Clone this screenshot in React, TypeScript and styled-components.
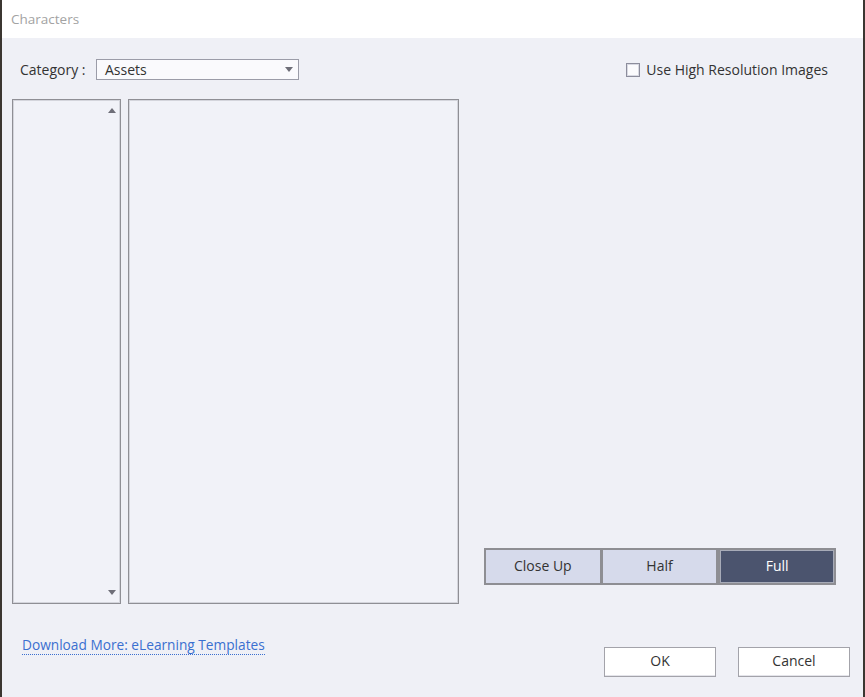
import * as React from "react";
import styled, { createGlobalStyle } from "styled-components";

const GlobalStyle = createGlobalStyle`
  html, body {
    margin: 0;
    padding: 0;
    background: #3b3631;
  }
  body {
    font-family: "Open Sans", "Noto Sans", "Liberation Sans", sans-serif;
    font-size: 14px;
    color: #333333;
  }
`;

const Dialog = styled.div`
  width: 861px;
  height: 697px;
  margin-left: 2px;
  background: #eff0f6;
  display: flex;
  flex-direction: column;
  overflow: hidden;
`;

const TitleBar = styled.div`
  height: 38px;
  background: #ffffff;
  display: flex;
  align-items: center;
  padding-left: 9px;
  font-size: 13.5px;
  color: #a3a3a3;
  flex-shrink: 0;
`;

const Content = styled.div`
  display: flex;
  flex-direction: column;
  padding: 21px 13px 0 10px;
  flex: 1;
`;

const TopRow = styled.div`
  height: 21px;
  display: flex;
  align-items: center;
  justify-content: space-between;
  margin-bottom: 19px;
`;

const CategoryGroup = styled.div`
  display: flex;
  align-items: center;
  padding-left: 8px;
`;

const Label = styled.span`
  width: 76px;
  color: #333333;
`;

const Select = styled.div`
  width: 188px;
  height: 19px;
  border: 1px solid #9b9ca8;
  background: #fafafd;
  display: flex;
  align-items: center;
  justify-content: space-between;
  padding: 0 5px 0 8px;
  box-sizing: content-box;
  color: #333333;
`;

const Caret = styled.span<{ $up?: boolean }>`
  display: block;
  width: 0;
  height: 0;
  border-left: 4px solid transparent;
  border-right: 4px solid transparent;
  ${(p) =>
    p.$up
      ? "border-bottom: 5px solid #6e6e78;"
      : "border-top: 5px solid #6e6e78;"}
`;

const CheckRow = styled.label`
  display: flex;
  align-items: center;
  gap: 6px;
  margin-right: 22px;
  color: #333333;
`;

const CheckBox = styled.span`
  width: 12px;
  height: 12px;
  border: 1px solid #8c8d9c;
  box-shadow: inset 0 0 0 1px #d8d9e2;
  background: #fbfbfd;
`;

const MainRow = styled.div`
  height: 505px;
  display: flex;
`;

const ListBox = styled.div<{ $width: number }>`
  width: ${(p) => p.$width}px;
  height: 100%;
  box-sizing: border-box;
  border: 1px solid #8f8f95;
  box-shadow: inset 0 0 0 1px #d4d5dc;
  background: #f1f2f8;
  margin-right: 7px;
  position: relative;
`;

const ScrollArrow = styled.div<{ $bottom?: boolean }>`
  position: absolute;
  display: flex;
  right: 4px;
  ${(p) => (p.$bottom ? "bottom: 8px;" : "top: 8px;")}
`;

const PreviewPanel = styled.div`
  flex: 1;
  display: flex;
  flex-direction: column;
  justify-content: flex-end;
  padding: 0 0 19px 18px;
`;

const Segmented = styled.div`
  width: 352px;
  height: 37px;
  display: flex;
`;

const SegButton = styled.button<{ $active?: boolean }>`
  flex: 1;
  height: 100%;
  margin: 0;
  font-family: inherit;
  font-size: 14px;
  border: 2px solid #8e8e93;
  border-left-width: ${(p) => (p.$active ? "2px" : "1px")};
  box-shadow: ${(p) => (p.$active ? "inset 0 0 0 1px #a7abb8" : "none")};
  background: ${(p) => (p.$active ? "#4b546e" : "#d6daeb")};
  color: ${(p) => (p.$active ? "#ffffff" : "#333333")};
  padding: 0 0 2px;
  &:first-child {
    border-left-width: 2px;
  }
`;

const Footer = styled.div`
  display: flex;
  align-items: flex-start;
  justify-content: space-between;
  padding: 32px 0 0 10px;
`;

const Link = styled.a`
  color: #3a6fd0;
  text-decoration: none;
  border-bottom: 1px dotted #3a6fd0;
  line-height: 17px;
  padding-bottom: 1px;
  font-size: 13.7px;
`;

const Buttons = styled.div`
  display: flex;
  gap: 22px;
  margin-top: 11px;
`;

const DialogButton = styled.button`
  width: 112px;
  height: 30px;
  font-family: inherit;
  font-size: 14px;
  color: #333333;
  background: #ffffff;
  border: 1px solid #a3a3aa;
  box-shadow: inset 0 -1px 0 #e4e4ea;
  padding: 0 0 3px;
`;

export default function App() {
  const [mode, setMode] = React.useState("Full");
  return (
    <>
      <GlobalStyle />
      <Dialog>
        <TitleBar>Characters</TitleBar>
        <Content>
          <TopRow>
            <CategoryGroup>
              <Label>Category :</Label>
              <Select>
                <span>Assets</span>
                <Caret />
              </Select>
            </CategoryGroup>
            <CheckRow>
              <CheckBox />
              Use High Resolution Images
            </CheckRow>
          </TopRow>
          <MainRow>
            <ListBox $width={109}>
              <ScrollArrow>
                <Caret $up />
              </ScrollArrow>
              <ScrollArrow $bottom>
                <Caret />
              </ScrollArrow>
            </ListBox>
            <ListBox $width={331} />
            <PreviewPanel>
              <Segmented>
                {["Close Up", "Half", "Full"].map((m) => (
                  <SegButton
                    key={m}
                    $active={mode === m}
                    onClick={() => setMode(m)}
                  >
                    {m}
                  </SegButton>
                ))}
              </Segmented>
            </PreviewPanel>
          </MainRow>
          <Footer>
            <Link href="#">Download More: eLearning Templates</Link>
            <Buttons>
              <DialogButton>OK</DialogButton>
              <DialogButton>Cancel</DialogButton>
            </Buttons>
          </Footer>
        </Content>
      </Dialog>
    </>
  );
}
